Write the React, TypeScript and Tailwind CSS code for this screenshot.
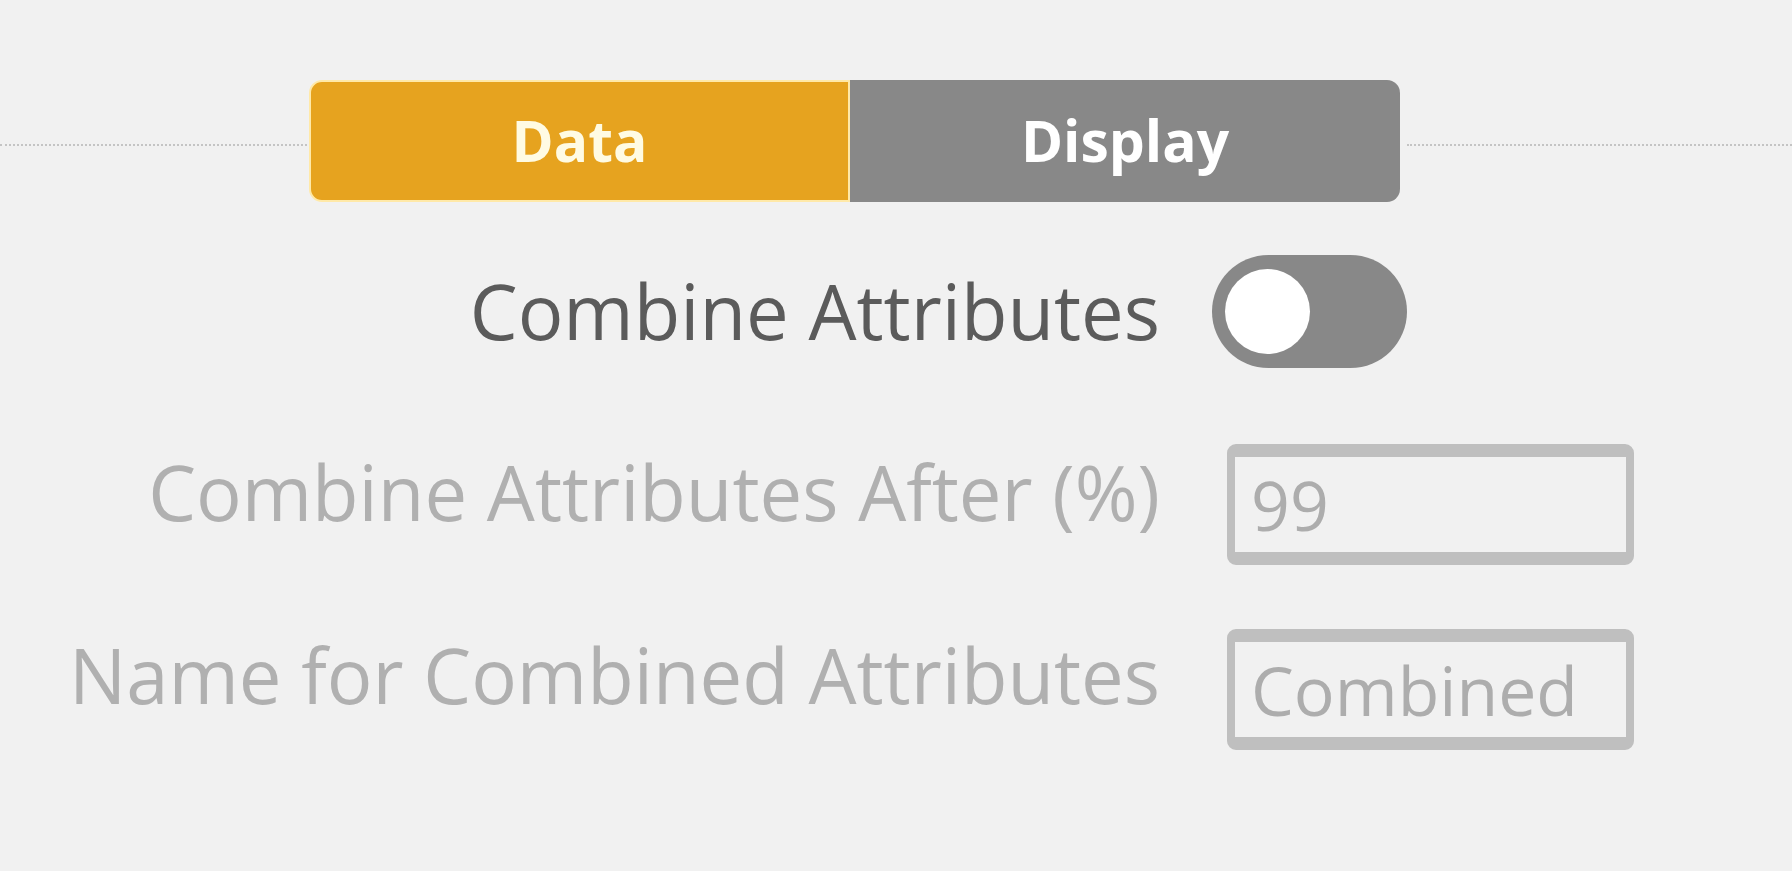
import React from "react";

function Field({ value, className }: { value: string; className?: string }) {
  return (
    <div
      className={
        "ml-[67px] w-[407px] h-[121px] border-x-[8px] border-y-[13px] border-[#bfbfbf] rounded-[9px] flex items-center pl-[16px] text-[68px] text-[#adadad] leading-none " +
        (className ?? "")
      }
    >
      <span>{value}</span>
    </div>
  );
}

export default function App() {
  return (
    <div className="w-full h-[871px] bg-[#f1f1f1] overflow-hidden pt-[80px] font-['Open_Sans',_'Noto_Sans',_sans-serif]">
      <div className="flex items-center h-[122px]">
        <div className="w-[307px] mt-[8px] border-t-2 border-dotted border-[#c4c4c4]" />
        <div className="ml-[2px] w-[1091px] h-full flex">
          <div className="w-[541px] h-full bg-[#e6a31f] border-2 border-[#ffe9a8] rounded-l-[13px] flex items-center justify-center text-[57px] font-bold text-[#fffbe3]">
            Data
          </div>
          <div className="flex-1 h-full bg-[#888888] rounded-r-[13px] flex items-center justify-center text-[57px] font-bold text-white">
            Display
          </div>
        </div>
        <div className="flex-1 ml-[7px] mt-[8px] border-t-2 border-dotted border-[#c4c4c4]" />
      </div>

      <div className="flex items-start mt-[53px]">
        <div className="w-[1160px] mt-[4px] text-right text-[76px] leading-[104px] text-[#5b5b5b]">
          Combine Attributes
        </div>
        <div className="ml-[52px] w-[195px] h-[113px] rounded-full bg-[#888888] flex items-center pl-[13px]">
          <div className="w-[85px] h-[85px] rounded-full bg-white" />
        </div>
      </div>

      <div className="flex items-start mt-[72px]">
        <div className="w-[1160px] text-right text-[76px] leading-[104px] text-[#b0b0b0]">
          Combine Attributes After (%)
        </div>
        <Field value="99" className="mt-[4px]" />
      </div>

      <div className="flex items-start mt-[58px]">
        <div className="w-[1160px] text-right text-[76px] leading-[104px] text-[#b0b0b0]">
          Name for Combined Attributes
        </div>
        <Field value="Combined" className="mt-[6px]" />
      </div>
    </div>
  );
}
